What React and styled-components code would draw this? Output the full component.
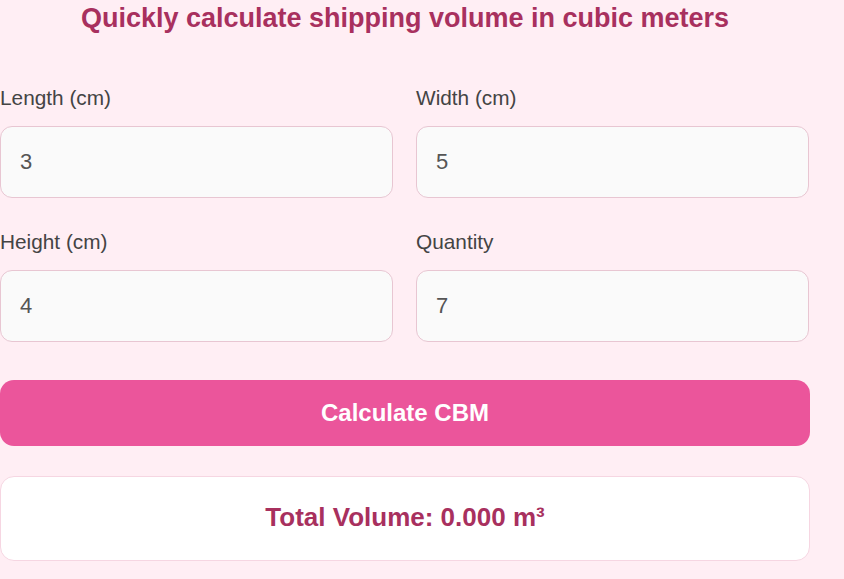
import { useState } from "react";
import styled, { createGlobalStyle } from "styled-components";

const GlobalStyle = createGlobalStyle`
  html, body {
    margin: 0;
    padding: 0;
    background: #ffeef4;
    font-family: "Liberation Sans", Arial, sans-serif;
  }
`;

const Page = styled.div`
  width: 810px;
  display: flex;
  flex-direction: column;
`;

const Title = styled.h1`
  margin: 3px 0 0;
  font-size: 27px;
  line-height: 31px;
  font-weight: bold;
  color: #a8305e;
  text-align: center;
`;

const Grid = styled.div`
  display: grid;
  grid-template-columns: 393px 393px;
  column-gap: 23px;
  row-gap: 31px;
  margin-top: 51px;
`;

const Field = styled.div`
  display: flex;
  flex-direction: column;
  gap: 16px;
`;

const Label = styled.label`
  font-size: 20.8px;
  line-height: 25px;
  color: #444;
`;

const Input = styled.input`
  box-sizing: border-box;
  height: 72px;
  width: 100%;
  padding: 0 19px;
  border: 1px solid #e8c6d2;
  border-radius: 12px;
  background: #fafafa;
  font-family: inherit;
  font-size: 22px;
  color: #555;
  outline: none;
`;

const Button = styled.button`
  margin-top: 38px;
  height: 66px;
  border: none;
  border-radius: 14px;
  background: #eb559b;
  color: #fff;
  font-family: inherit;
  font-size: 24px;
  font-weight: bold;
  cursor: pointer;
`;

const Result = styled.div`
  box-sizing: border-box;
  margin-top: 30px;
  height: 85px;
  padding-bottom: 2px;
  display: flex;
  align-items: center;
  justify-content: center;
  background: #fff;
  border: 1px solid #f6d6e2;
  border-radius: 14px;
  font-size: 26px;
  font-weight: bold;
  color: #a8305e;
`;

const fields = [
  { key: "length", label: "Length (cm)", value: "3" },
  { key: "width", label: "Width (cm)", value: "5" },
  { key: "height", label: "Height (cm)", value: "4" },
  { key: "qty", label: "Quantity", value: "7" },
];

const App = () => {
  const [values, setValues] = useState(
    Object.fromEntries(fields.map((f) => [f.key, f.value]))
  );
  const [total, setTotal] = useState(0);

  const calc = () => {
    const cbm =
      (values.length * values.width * values.height * values.qty) / 1000000;
    setTotal(cbm);
  };

  return (
    <Page>
      <GlobalStyle />
      <Title>Quickly calculate shipping volume in cubic meters</Title>
      <Grid>
        {fields.map((f) => (
          <Field key={f.key}>
            <Label htmlFor={f.key}>{f.label}</Label>
            <Input
              id={f.key}
              type="text"
              value={values[f.key]}
              onChange={(e) => setValues({ ...values, [f.key]: e.target.value })}
            />
          </Field>
        ))}
      </Grid>
      <Button onClick={calc}>Calculate CBM</Button>
      <Result>Total Volume: {total.toFixed(3)} m³</Result>
    </Page>
  );
};

export default App;
